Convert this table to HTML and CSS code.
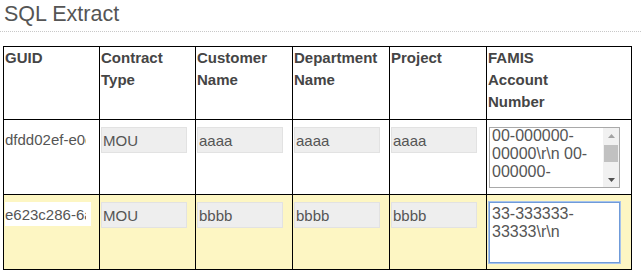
FILE: index.html
```html
<!DOCTYPE html>
<html lang="en">
<head>
<meta charset="utf-8">
<title>SQL Extract</title>
<link rel="stylesheet" href="styles.css">
</head>
<body>
<div class="page-header">
  <h1 class="page-title">SQL Extract</h1>
</div>
<table class="grid">
  <colgroup>
    <col class="c-96">
    <col class="c-96">
    <col class="c-97">
    <col class="c-97">
    <col class="c-97">
    <col class="c-famis">
  </colgroup>
  <thead>
    <tr>
      <th>GUID</th>
      <th>Contract Type</th>
      <th>Customer Name</th>
      <th>Department Name</th>
      <th>Project</th>
      <th>FAMIS<br>Account<br>Number</th>
    </tr>
  </thead>
  <tbody>
    <tr>
      <td><input class="guid" type="text" readonly value="dfdd02ef-e0c4-4f3a-9b1e-7d21c5a0e813"></td>
      <td><input class="field" type="text" readonly value="MOU"></td>
      <td><input class="field" type="text" readonly value="aaaa"></td>
      <td><input class="field" type="text" readonly value="aaaa"></td>
      <td><input class="field" type="text" readonly value="aaaa"></td>
      <td>
        <div class="codes-box">
          <textarea class="codes codes--scroll">00-000000-00000\r\n 00-000000-00000\r\n 00-000000-00000</textarea>
          <div class="scrollbar" aria-hidden="true">
            <div class="sb-btn">
              <svg width="7" height="4" viewBox="0 0 7 4"><path d="M0 4 L3.5 0 L7 4 Z" fill="#a3a3a3"/></svg>
            </div>
            <div class="sb-track"><div class="sb-thumb"></div></div>
            <div class="sb-btn">
              <svg width="7" height="4" viewBox="0 0 7 4"><path d="M0 0 L7 0 L3.5 4 Z" fill="#505050"/></svg>
            </div>
          </div>
        </div>
      </td>
    </tr>
    <tr class="is-edited">
      <td><input class="guid" type="text" readonly value="e623c286-6a1f-4b07-8c52-31d9e04fa7b6"></td>
      <td><input class="field" type="text" readonly value="MOU"></td>
      <td><input class="field" type="text" readonly value="bbbb"></td>
      <td><input class="field" type="text" readonly value="bbbb"></td>
      <td><input class="field" type="text" readonly value="bbbb"></td>
      <td><textarea class="codes codes--single is-active">33-333333-33333\r\n</textarea></td>
    </tr>
  </tbody>
</table>
<script src="script.js"></script>
</body>
</html>
```

FILE: styles.css
```css
html, body {
  margin: 0;
  padding: 0;
  background: #fff;
  font-family: "Liberation Sans", Arial, sans-serif;
}

.page-header {
  padding: 2px 0 4px 4px;
  border-bottom: 1px dotted #c8c8c8;
  margin-bottom: 14px;
}

.page-title {
  margin: 0;
  font-size: 21.5px;
  line-height: 25px;
  font-weight: normal;
  color: #555;
}

.grid {
  margin-left: 3px;
  width: 629px;
  table-layout: fixed;
  border-collapse: collapse;
  border: 1px solid #000;
}

.c-96 { width: 96px; }
.c-97 { width: 97px; }
.c-famis { width: 145px; }

.grid th,
.grid td {
  border: 1px solid #000;
  vertical-align: top;
  text-align: left;
}

.grid th {
  padding: 0 1px 6px;
  font-size: 15px;
  line-height: 22px;
  font-weight: bold;
  color: #454545;
}

.grid td {
  padding: 7px 1px 6px;
}

.is-edited td {
  background: #fdf6c3;
}

.field,
.guid {
  display: block;
  box-sizing: border-box;
  width: 86px;
  margin: 0;
  font-family: "Liberation Sans", Arial, sans-serif;
  font-size: 15px;
  color: #555;
  outline: none;
}

.field {
  height: 26px;
  padding: 0 1px;
  border: 1px solid #e2e2e2;
  background: #eee;
}

.guid {
  height: 24px;
  border: 0;
  padding: 0 5px 0 0;
  background: #fff;
}

/* account number lists */
.codes {
  display: block;
  box-sizing: border-box;
  margin: 0;
  padding: 2px;
  background: #fff;
  font-family: "Liberation Sans", Arial, sans-serif;
  font-size: 16px;
  line-height: normal;
  color: #555;
  resize: none;
  outline: none;
}

.codes-box {
  display: flex;
  align-items: flex-start;
  box-sizing: border-box;
  width: 131px;
  height: 61px;
  margin-left: 1px;
  border: 1px solid #a9a9a9;
  background: #fff;
}

.codes--scroll {
  flex: 1;
  min-width: 0;
  height: 53px;
  border: 0;
  overflow: hidden;
}

.codes--single {
  width: 131px;
  height: 61px;
  margin-left: 1px;
  border: 1px solid #a9a9a9;
  overflow: hidden;
}

.codes.is-active,
.codes--single:focus {
  border-color: #6f9bd9;
  outline: 1px solid #a7c3ec;
  outline-offset: 0;
}

/* classic vertical scrollbar beside the list */
.scrollbar {
  align-self: stretch;
  width: 16px;
  display: flex;
  flex-direction: column;
  background: #f1f1f1;
}

.sb-btn {
  height: 15px;
  display: flex;
  align-items: center;
  justify-content: center;
}

.sb-btn svg {
  display: block;
}

.sb-track {
  flex: 1;
  padding: 2px 1px 0;
}

.sb-thumb {
  height: 17px;
  background: #c1c1c1;
}
```

FILE: script.js
```js
// Nudge the first account list down a little and put the cursor at the end of the edited one.
var boxes = document.querySelectorAll('.codes');
boxes[0].scrollTop = 3;
var edited = boxes[1];
edited.focus();
edited.setSelectionRange(edited.value.length, edited.value.length);
```
